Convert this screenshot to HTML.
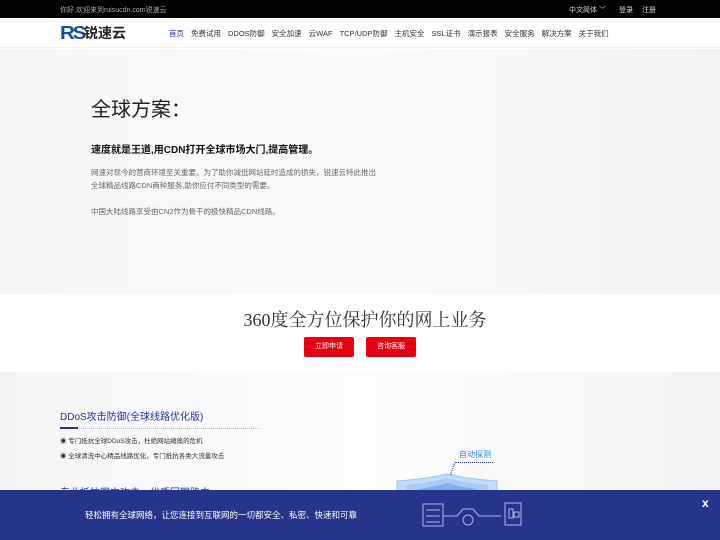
<!DOCTYPE html>
<html><head><meta charset="utf-8"><style>
*{margin:0;padding:0;box-sizing:border-box}
body{width:720px;height:540px;overflow:hidden;position:relative;font-family:"Liberation Sans","Noto Sans CJK SC",sans-serif;background:#fff}
.top{height:18px;background:#000;color:#aaa;font-size:7px;position:relative}
.top span{position:absolute;top:5px}
.nav{height:30px;background:#fff;position:relative;border-bottom:1px solid #eee}
.nav .menu{position:absolute;left:169px;top:10px;font-size:7.5px;color:#333;white-space:nowrap}
.nav .menu span{margin-right:7px}
.hero{position:absolute;top:49px;left:0;width:720px;height:245px;background:linear-gradient(90deg,#f6f6f7,#fafafa 50%,#f3f3f4)}
.s2{position:absolute;top:294px;left:0;width:720px;height:78px;background:#fff}
.s3{position:absolute;top:372px;left:0;width:720px;height:168px;background:linear-gradient(90deg,#f4f5f7,#fdfdfe 50%,#f3f4f6)}
.btn{position:absolute;top:337px;width:50px;height:20px;background:#e60012;color:#fff;font-size:7px;text-align:center;line-height:20px;border-radius:2px}
.bar{position:absolute;top:490px;left:0;width:720px;height:50px;background:#27348b}
</style></head><body>
<div class="top"><span style="left:60px">你好,欢迎来到ruisucdn.com锐速云</span><span style="left:569px;color:#ddd">中文简体 ﹀</span><span style="left:619px;color:#ddd">登录</span><span style="left:642px;color:#ddd">注册</span></div>
<div class="nav">
<div style="position:absolute;left:60px;top:5px;font:900 18px 'Liberation Sans';color:#1a4a9c;letter-spacing:-2px;transform:scaleX(1.15);transform-origin:left">RS</div>
<div style="position:absolute;left:84px;top:5px;font-size:14px;font-weight:bold;color:#222">锐速云</div>
<div class="menu"><span style="color:#27348b">首页</span><span>免费试用</span><span>DDOS防御</span><span>安全加速</span><span>云WAF</span><span>TCP/UDP防御</span><span>主机安全</span><span>SSL证书</span><span>演示报表</span><span>安全服务</span><span>解决方案</span><span>关于我们</span></div>
</div>
<div class="hero">
<div style="position:absolute;left:91px;top:44px;font-size:20px;color:#222">全球方案：</div>
<div style="position:absolute;left:91px;top:92px;font-size:10px;font-weight:bold;color:#111">速度就是王道,用CDN打开全球市场大门,提高管理。</div>
<div style="position:absolute;left:91px;top:117px;font-size:7.5px;color:#666;line-height:13px">网速对现今的营商环境至关重要。为了助你减低网站延时造成的损失，锐速云特此推出<br>全球精品线路CDN两种服务,助你应付不同类型的需要。<br><br>中国大陆线路享受由CN2作为骨干的极快精品CDN线路。</div>
</div>
<div class="s2"><div style="position:absolute;left:0;width:730px;text-align:center;top:12px;font-family:'Liberation Serif','Noto Serif CJK SC',serif;font-size:18px;color:#333">360度全方位保护你的网上业务</div></div>
<div class="btn" style="left:304px">立即申请</div><div class="btn" style="left:366px">咨询客服</div>
<div class="s3">
<div style="position:absolute;left:60px;top:36px;font-size:10px;color:#27348b">DDoS攻击防御(全球线路优化版)</div>
<div style="position:absolute;left:60px;top:56px;width:200px;border-top:1px dotted #bbb"></div>
<div style="position:absolute;left:60px;top:55px;width:18px;height:2px;background:#27348b"></div>
<div style="position:absolute;left:60px;top:62px;font-size:6.5px;color:#333;line-height:15px">◉ 专门抵抗全球DDoS攻击，杜绝网站瘫痪的危机<br>◉ 全球清洗中心精品线路优化，专门抵抗各类大流量攻击</div>
<div style="position:absolute;left:60px;top:112px;font-size:10px;color:#27348b">专业抵抗国内攻击，优质回国路由</div>
<div style="position:absolute;left:459px;top:77px;font-size:8px;color:#2a8ad8">自动探测</div>
<div style="position:absolute;left:455px;top:90px;width:38px;border-top:1px dotted #27348b"></div>
<div style="position:absolute;left:452px;top:91px;width:1px;height:12px;border-left:1px dotted #27348b;transform:rotate(20deg)"></div>
<div style="position:absolute;left:449px;top:102px;width:4px;height:4px;border-radius:50%;background:#27348b"></div>
<svg style="position:absolute;left:396px;top:100px" width="102" height="20"><path d="M1 20V9Q30 7 51 2Q72 7 101 9V20Z" fill="#c5dcf8" stroke="#9fc3f0"/><path d="M10 20V13Q32 11 51 6Q70 11 92 13V20Z" fill="#a9cbf4"/><path d="M22 20V17Q38 15 51 11Q64 15 80 17V20Z" fill="#7fb0ee"/></svg>
</div>
<div class="bar">
<div style="position:absolute;left:85px;top:19px;font-size:8.5px;color:#fff">轻松拥有全球网络，让您连接到互联网的一切都安全、私密、快速和可靠</div>
<svg style="position:absolute;left:420px;top:10px" width="105" height="32" fill="none" stroke="#aeb7e8" stroke-width="1"><rect x="3" y="4" width="20" height="22"/><line x1="6" y1="10" x2="20" y2="10"/><line x1="6" y1="16" x2="20" y2="16"/><line x1="6" y1="22" x2="20" y2="22"/><path d="M23 16h14l6-7h10l6 7h22"/><circle cx="48" cy="20" r="5"/><rect x="85" y="3" width="16" height="22"/><rect x="89" y="9" width="4" height="9"/><rect x="94" y="12" width="5" height="5"/></svg>
<div style="position:absolute;left:702px;top:6px;color:#fff;font-weight:bold;font-size:12px">x</div>
</div>
</body></html>
